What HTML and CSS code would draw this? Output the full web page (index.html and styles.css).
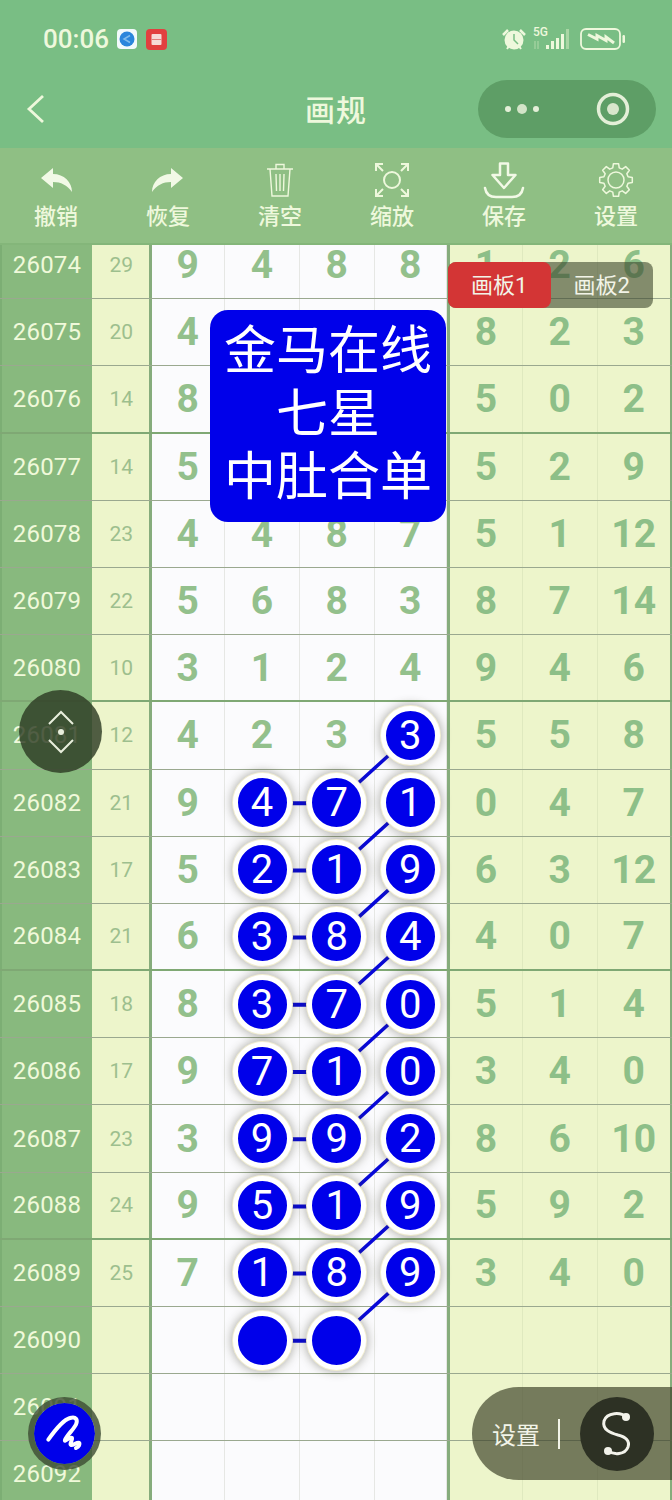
FILE: index.html
```html
<!DOCTYPE html>
<html lang="zh-CN">
<head>
    <meta charset="UTF-8">
    <meta name="viewport" content="width=device-width, initial-scale=1.0">
    <title>画规</title>
    <link rel="stylesheet" href="styles.css">
</head>
<body>
<div class="page">
    <header class="head">
        <div class="status">
            <div class="status-left">
                <span class="time">00:06</span>
                <svg class="app-icon" width="20" height="20" viewBox="0 0 20 20"><rect width="20" height="20" rx="4" fill="#f2fafc"/><circle cx="10" cy="10" r="7.500" fill="#2a86dc"/><path d="M13 6.500L7 10l6 3.500" fill="none" stroke="#7fbcec" stroke-width="1.500"/></svg>
                <svg class="app-icon" width="21" height="21" viewBox="0 0 21 21"><rect width="21" height="21" rx="4" fill="#e2403f"/><rect x="5.500" y="5" width="10" height="11" rx="1" fill="#f6dcd8"/><path d="M5.500 10.500h10" stroke="#e2807c" stroke-width="1"/></svg>
            </div>
            <div class="status-right">
                <svg width="24" height="23" viewBox="0 0 24 23"><path d="M1 7L6 2M23 7L18 2" stroke="#eef8dc" stroke-width="2.500" fill="none"/><circle cx="12" cy="12" r="9.500" fill="#eef8dc"/><path d="M12 6v6l4 4" stroke="#79be84" stroke-width="1.500" fill="none"/><path d="M5 21l2-3M19 21l-2-3" stroke="#eef8dc" stroke-width="2"/></svg>
                <div class="net">
                    <span class="net-label">5G</span>
                    <svg width="38" height="22" viewBox="0 0 38 22"><path d="M2 13v8M5 13v8" stroke="#a9d6a4" stroke-width="1.200"/><g fill="#eef8dc"><rect x="13" y="17" width="3" height="4"/><rect x="18" y="13" width="3" height="8"/><rect x="23" y="10" width="3" height="11"/><rect x="28" y="6" width="3" height="15"/></g><rect x="33" y="1" width="3" height="20" fill="#a9d6a4"/></svg>
                </div>
                <svg class="battery" width="46" height="22" viewBox="0 0 46 22"><rect x="1" y="1" width="39" height="20" rx="5" fill="none" stroke="#eef8dc" stroke-width="1.800"/><path d="M8 6.500l9 4.500V7.500l9 5V9l8 6" fill="none" stroke="#eef8dc" stroke-width="3"/><rect x="42.500" y="7" width="2.500" height="8" rx="1.200" fill="#eef8dc"/></svg>
            </div>
        </div>
        <nav class="nav">
            <svg class="back" width="20" height="30" viewBox="0 0 20 30"><path d="M17 2L3 15l14 13" fill="none" stroke="#eef8dc" stroke-width="2.800"/></svg>
            <div class="title">画规</div>
            <div class="capsule">
                <svg width="36" height="14" viewBox="0 0 36 14"><circle cx="4" cy="7" r="3" fill="#e4efd8"/><circle cx="18" cy="7" r="5" fill="#d3e4c8"/><circle cx="32" cy="7" r="3" fill="#e4efd8"/></svg>
                <svg width="34" height="34" viewBox="0 0 34 34"><circle cx="17" cy="17" r="14.500" fill="none" stroke="#e4efd8" stroke-width="3.500"/><circle cx="17" cy="17" r="6" fill="#d8e6cc"/></svg>
            </div>
        </nav>
    </header>

    <div class="tools">
        <div class="tool">
            <svg width="36" height="36" viewBox="0 0 36 36"><path d="M3 16L15 6v6c11 0 19 8 19 18-5-7-11-10-19-10v6z" fill="#f2f9e6"/></svg>
            <span>撤销</span>
        </div>
        <div class="tool">
            <svg width="36" height="36" viewBox="0 0 36 36"><path d="M33 16L21 6v6C10 12 2 20 2 30c5-7 11-10 19-10v6z" fill="#f2f9e6"/></svg>
            <span>恢复</span>
        </div>
        <div class="tool">
            <svg width="36" height="36" viewBox="0 0 36 36" fill="none" stroke="#eef8dc" stroke-width="1.400"><path d="M5 7h26M14 7V2.500h8V7M8 7l2 27h16l2-27M14 12l.5 17M18 12v17M22 12l-.5 17"/></svg>
            <span>清空</span>
        </div>
        <div class="tool">
            <svg width="36" height="36" viewBox="0 0 36 36" fill="none" stroke="#eef8dc" stroke-width="2"><circle cx="18" cy="18" r="8"/><path d="M2 9V2h7M2 2l7 7M34 9V2h-7M34 2l-7 7M2 27v7h7M2 34l7-7M34 27v7h-7M34 34l-7-7"/></svg>
            <span>缩放</span>
        </div>
        <div class="tool">
            <svg width="36" height="36" viewBox="0 0 36 36" fill="none" stroke="#f2f9e6" stroke-width="2.500" stroke-linejoin="round" stroke-linecap="round"><path d="M14 1.500h8V13h7.500L18 26 6.500 13H14z"/><path d="M-1 26c1 6 5 9 11 9h16c6 0 10-3 11-9"/></svg>
            <span>保存</span>
        </div>
        <div class="tool">
            <svg width="36" height="36" viewBox="0 0 36 36" fill="none" stroke="#eef8dc" stroke-width="1.500" stroke-linejoin="round"><polygon points="30.070,14.760 34.300,15.420 34.300,20.580 30.070,21.240 28.830,24.250 31.350,27.700 27.700,31.350 24.250,28.830 21.240,30.070 20.580,34.300 15.420,34.300 14.760,30.070 11.750,28.830 8.300,31.350 4.650,27.700 7.170,24.250 5.930,21.240 1.700,20.580 1.700,15.420 5.930,14.760 7.170,11.750 4.650,8.300 8.300,4.650 11.750,7.170 14.760,5.930 15.420,1.700 20.580,1.700 21.240,5.930 24.250,7.170 27.700,4.650 31.350,8.300 28.830,11.750"/><circle cx="18" cy="18" r="8"/></svg>
            <span>设置</span>
        </div>
    </div>

    <div class="board">
        <div class="rows">
            <svg class="links" width="672" height="1270" viewBox="0 0 672 1270"><path d="M410 504L336 571.200M410 571.200L336 638.400M410 638.400L336 705.600M410 705.600L336 772.800M410 772.800L336 840M410 840L336 907.200M410 907.200L336 974.400M410 974.400L336 1041.600M410 1041.600L336 1108.800" fill="none" stroke="#0808d8" stroke-width="3.500"/><path d="M262 571.200H336M262 638.400H336M262 705.600H336M262 772.800H336M262 840H336M262 907.200H336M262 974.400H336M262 1041.600H336M262 1108.800H336" fill="none" stroke="#0808d8" stroke-width="4"/></svg>
            <div class="row"><span class="idx">26074</span><span class="per">29</span><span class="num">9</span><span class="num">4</span><span class="num">8</span><span class="num">8</span><span class="num alt">1</span><span class="num alt">2</span><span class="num alt">6</span></div>
            <div class="row"><span class="idx">26075</span><span class="per">20</span><span class="num">4</span><span class="num"></span><span class="num"></span><span class="num"></span><span class="num alt">8</span><span class="num alt">2</span><span class="num alt">3</span></div>
            <div class="row thick"><span class="idx">26076</span><span class="per">14</span><span class="num">8</span><span class="num"></span><span class="num"></span><span class="num"></span><span class="num alt">5</span><span class="num alt">0</span><span class="num alt">2</span></div>
            <div class="row"><span class="idx">26077</span><span class="per">14</span><span class="num">5</span><span class="num"></span><span class="num"></span><span class="num"></span><span class="num alt">5</span><span class="num alt">2</span><span class="num alt">9</span></div>
            <div class="row"><span class="idx">26078</span><span class="per">23</span><span class="num">4</span><span class="num">4</span><span class="num">8</span><span class="num">7</span><span class="num alt">5</span><span class="num alt">1</span><span class="num alt">12</span></div>
            <div class="row"><span class="idx">26079</span><span class="per">22</span><span class="num">5</span><span class="num">6</span><span class="num">8</span><span class="num">3</span><span class="num alt">8</span><span class="num alt">7</span><span class="num alt">14</span></div>
            <div class="row thick"><span class="idx">26080</span><span class="per">10</span><span class="num">3</span><span class="num">1</span><span class="num">2</span><span class="num">4</span><span class="num alt">9</span><span class="num alt">4</span><span class="num alt">6</span></div>
            <div class="row"><span class="idx">26081</span><span class="per">12</span><span class="num">4</span><span class="num">2</span><span class="num">3</span><span class="num"><b class="ball">3</b></span><span class="num alt">5</span><span class="num alt">5</span><span class="num alt">8</span></div>
            <div class="row"><span class="idx">26082</span><span class="per">21</span><span class="num">9</span><span class="num"><b class="ball">4</b></span><span class="num"><b class="ball">7</b></span><span class="num"><b class="ball">1</b></span><span class="num alt">0</span><span class="num alt">4</span><span class="num alt">7</span></div>
            <div class="row"><span class="idx">26083</span><span class="per">17</span><span class="num">5</span><span class="num"><b class="ball">2</b></span><span class="num"><b class="ball">1</b></span><span class="num"><b class="ball">9</b></span><span class="num alt">6</span><span class="num alt">3</span><span class="num alt">12</span></div>
            <div class="row thick"><span class="idx">26084</span><span class="per">21</span><span class="num">6</span><span class="num"><b class="ball">3</b></span><span class="num"><b class="ball">8</b></span><span class="num"><b class="ball">4</b></span><span class="num alt">4</span><span class="num alt">0</span><span class="num alt">7</span></div>
            <div class="row"><span class="idx">26085</span><span class="per">18</span><span class="num">8</span><span class="num"><b class="ball">3</b></span><span class="num"><b class="ball">7</b></span><span class="num"><b class="ball">0</b></span><span class="num alt">5</span><span class="num alt">1</span><span class="num alt">4</span></div>
            <div class="row"><span class="idx">26086</span><span class="per">17</span><span class="num">9</span><span class="num"><b class="ball">7</b></span><span class="num"><b class="ball">1</b></span><span class="num"><b class="ball">0</b></span><span class="num alt">3</span><span class="num alt">4</span><span class="num alt">0</span></div>
            <div class="row"><span class="idx">26087</span><span class="per">23</span><span class="num">3</span><span class="num"><b class="ball">9</b></span><span class="num"><b class="ball">9</b></span><span class="num"><b class="ball">2</b></span><span class="num alt">8</span><span class="num alt">6</span><span class="num alt">10</span></div>
            <div class="row thick"><span class="idx">26088</span><span class="per">24</span><span class="num">9</span><span class="num"><b class="ball">5</b></span><span class="num"><b class="ball">1</b></span><span class="num"><b class="ball">9</b></span><span class="num alt">5</span><span class="num alt">9</span><span class="num alt">2</span></div>
            <div class="row"><span class="idx">26089</span><span class="per">25</span><span class="num">7</span><span class="num"><b class="ball">1</b></span><span class="num"><b class="ball">8</b></span><span class="num"><b class="ball">9</b></span><span class="num alt">3</span><span class="num alt">4</span><span class="num alt">0</span></div>
            <div class="row"><span class="idx">26090</span><span class="per"></span><span class="num"></span><span class="num"><b class="ball"></b></span><span class="num"><b class="ball"></b></span><span class="num"></span><span class="num alt"></span><span class="num alt"></span><span class="num alt"></span></div>
            <div class="row"><span class="idx">26091</span><span class="per"></span><span class="num"></span><span class="num"></span><span class="num"></span><span class="num"></span><span class="num alt"></span><span class="num alt"></span><span class="num alt"></span></div>
            <div class="row"><span class="idx">26092</span><span class="per"></span><span class="num"></span><span class="num"></span><span class="num"></span><span class="num"></span><span class="num alt"></span><span class="num alt"></span><span class="num alt"></span></div>
        </div>
    </div>

    <!-- floating things over the board -->
    <div class="tabs">
        <span class="tab tab-on">画板1</span>
        <span class="tab">画板2</span>
    </div>

    <div class="notice">
        <div>金马在线</div>
        <div>七星</div>
        <div>中肚合单</div>
    </div>

    <div class="float-move">
        <svg width="40" height="46" viewBox="0 0 40 46" fill="none" stroke="#e8eedc" stroke-width="2"><path d="M8 15L20 3l12 12M8 31l12 12 12-12"/><circle cx="20" cy="23" r="3" fill="#e8eedc" stroke="none"/></svg>
    </div>

    <div class="float-pen">
        <svg width="44" height="44" viewBox="0 0 44 44" fill="none" stroke="#fff" stroke-width="4" stroke-linecap="round" stroke-linejoin="round"><path d="M5.300 27.700C10 21 20 8 27 6c6-2 8 2 6 6.500-2 4.500-9 10.500-11 15.500-1 3 5-4 7-2 1 2-3 6-1 7 2 1 7-4 8.300-2 .7 2-1.300 4-3.300 5"/></svg>
    </div>

    <div class="float-set">
        <span class="set-text">设置</span>
        <i class="set-bar"></i>
        <div class="set-btn">
            <svg width="44" height="50" viewBox="0 0 44 50" fill="none" stroke="#f2f2ea" stroke-width="3" stroke-linecap="round"><path d="M31 8C26 3 12 3 9 12c-2 9 7 12 14 14 8 2 12 6 10 12-3 8-14 8-20 4"/><circle cx="31" cy="8" r="4" fill="#f2f2ea" stroke="none"/><circle cx="13" cy="42" r="4" fill="#f2f2ea" stroke="none"/></svg>
        </div>
    </div>
</div>
</body>
</html>
```

FILE: styles.css
```css
* {
    box-sizing: border-box;
}
html, body {
    margin: 0;
    padding: 0;
}
body {
    font-family: Roboto, "Noto Sans CJK SC", sans-serif;
    background-color: #79be84;
}
.page {
    position: relative;
    width: 672px;
    height: 1500px;
    overflow: hidden;
    display: flex;
    flex-direction: column;
}

/* status bar + title bar */
.head {
    height: 148px;
    background-color: #79be84;
    color: #eef8dc;
}
.status {
    height: 80px;
    padding: 0 46px 2px 43px;
    display: flex;
    align-items: center;
    justify-content: space-between;
}
.status-left {
    display: flex;
    align-items: center;
    gap: 9px;
}
.time {
    font-size: 26px;
    font-weight: 500;
    margin-right: -1px;
}
.status-right {
    display: flex;
    align-items: center;
    gap: 7px;
}
.net {
    position: relative;
    width: 38px;
    height: 22px;
}
.net svg {
    display: block;
}
.net-label {
    position: absolute;
    top: -3px;
    left: 0;
    font-size: 12px;
    line-height: 14px;
    font-weight: 500;
}
.battery {
    margin-left: 2px;
}
.nav {
    height: 58px;
    padding: 0 16px;
    display: grid;
    grid-template-columns: 1fr auto 1fr;
    align-items: center;
}
.back {
    margin-left: 10px;
}
.title {
    font-size: 30px;
    font-weight: 500;
    line-height: 54px;
    letter-spacing: 1px;
    padding-top: 4px;
}
.capsule {
    justify-self: end;
    width: 178px;
    height: 58px;
    border-radius: 29px;
    background-color: #5e9e66;
    padding: 0 26px;
    display: flex;
    align-items: center;
    justify-content: space-between;
}

/* toolbar */
.tools {
    height: 95px;
    background-color: #8fbf84;
    display: flex;
}
.tool {
    flex: 1;
    display: flex;
    flex-direction: column;
    align-items: center;
    padding-top: 14px;
    color: #eef8dc;
    font-size: 22px;
    font-weight: 500;
    line-height: 30px;
}
.tool svg {
    overflow: visible;
    margin-bottom: 4px;
}

/* table */
.board {
    flex: 1;
    overflow: hidden;
    border-top: 2px solid #84b67a;
    background-color: #fbfbfd;
}
.rows {
    position: relative;
    margin-top: -13px;
}
.links {
    position: absolute;
    top: 0;
    left: 0;
    z-index: 1;
}
.row {
    height: 67.2px;
    display: grid;
    grid-template-columns: 92px 56.5px 76.5px 75px 74.5px 72.5px 76px 74.5px 74.5px;
    border-bottom: 1px solid #9aa88f;
}
.row.thick {
    border-bottom: 2px solid #7fa874;
}
.row span {
    display: flex;
    align-items: center;
    justify-content: center;
}
.idx {
    background-color: #88b97e;
    border-left: 2px solid #7cae74;
    color: #f0f9da;
    font-size: 24px;
    letter-spacing: 0.2px;
}
.per {
    background-color: #edf5cb;
    color: #9dbf8e;
    font-size: 21px;
    padding-left: 2px;
}
.num {
    color: #93c08c;
    font-size: 39px;
    font-weight: 700;
    border-right: 1.5px solid #e6e7e4;
}
.row .num:nth-child(3), .row .num:nth-child(7) {
    border-left: 3px solid #86ac7c;
}
.num.alt {
    background-color: #edf5cb;
    color: #8dbf88;
    border-right-color: #dfe9bf;
}
.row .num:last-child {
    border-right: 2px solid #86ac7c;
}
.ball {
    position: relative;
    z-index: 2;
    width: 59px;
    height: 59px;
    flex: none;
    border-radius: 50%;
    background-color: #0000ea;
    border: 5px solid #fff;
    box-shadow: 0 0 0 1px #f1edd2, 0 0 10px 2px rgba(60, 60, 40, 0.38);
    color: #fff;
    font-size: 40px;
    font-weight: 400;
    display: flex;
    align-items: center;
    justify-content: center;
}

/* overlays */
.tabs {
    position: absolute;
    z-index: 3;
    top: 262px;
    left: 448px;
    width: 205px;
    height: 46px;
    display: flex;
    border-radius: 8px;
    background-color: rgba(60, 70, 45, 0.6);
}
.tab {
    flex: 1;
    display: flex;
    align-items: center;
    justify-content: center;
    padding-bottom: 4px;
    color: #f2f4e8;
    font-size: 22px;
    border-radius: 8px;
}
.tab-on {
    background-color: #d33535;
}
.notice {
    position: absolute;
    z-index: 3;
    top: 310px;
    left: 210px;
    width: 236px;
    height: 212px;
    padding-bottom: 3px;
    border-radius: 18px;
    background-color: #0000ea;
    color: #fff;
    font-size: 52px;
    line-height: 63px;
    text-align: center;
    display: flex;
    flex-direction: column;
    justify-content: center;
}
.float-move {
    position: absolute;
    z-index: 3;
    top: 690px;
    left: 19px;
    width: 83px;
    height: 83px;
    border-radius: 50%;
    background-color: rgba(45, 60, 35, 0.82);
    display: flex;
    align-items: center;
    justify-content: center;
}
.float-pen {
    position: absolute;
    z-index: 3;
    top: 1397px;
    left: 28px;
    width: 73px;
    height: 73px;
    border-radius: 50%;
    background-color: #0000ea;
    border: 6px solid rgba(60, 75, 50, 0.8);
    background-clip: padding-box;
    display: flex;
    align-items: center;
    justify-content: center;
}
.float-set {
    position: absolute;
    z-index: 3;
    top: 1387px;
    left: 472px;
    width: 200px;
    height: 93px;
    border-radius: 46.5px 0 0 46.5px;
    background-color: rgba(60, 65, 40, 0.68);
    padding-left: 20px;
    display: flex;
    align-items: center;
}
.set-text {
    color: #f2f4e8;
    font-size: 24px;
}
.set-bar {
    width: 2px;
    height: 30px;
    margin-left: 18px;
    background-color: #f2f4e8;
}
.set-btn {
    width: 74px;
    height: 74px;
    margin-left: 20px;
    border-radius: 50%;
    background-color: #2d3124;
    display: flex;
    align-items: center;
    justify-content: center;
}
```
